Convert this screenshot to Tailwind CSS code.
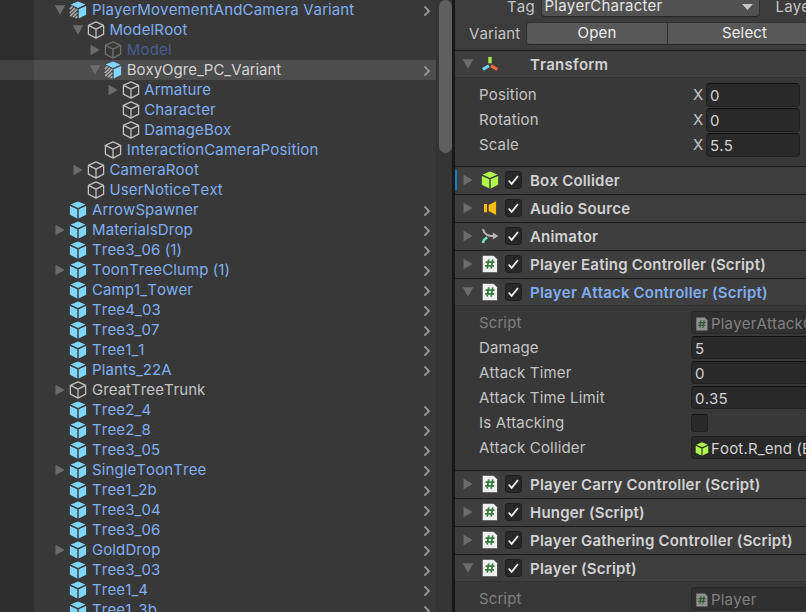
<!DOCTYPE html>
<html lang="en">
<head>
<meta charset="utf-8">
<title>Hierarchy and Inspector</title>
<script src="https://cdn.jsdelivr.net/npm/@tailwindcss/browser@4"></script>
</head>
<body class="w-[806px] h-[612px] overflow-hidden bg-[#383838] font-['Inter',sans-serif] text-[15px] leading-5 tracking-[0.17px] [font-kerning:none] text-[#c4c4c4]">
<svg class="hidden">
  <symbol id="outline" viewBox="0 0 18 18"><path d="M9 .9 16.6 4.3V13.2L9 17.1 1.4 13.2V4.3ZM1.4 4.3 9 8.1 16.6 4.3M9 8.1V17.1" fill="none" stroke="currentColor" stroke-width="1.3" stroke-linejoin="round"/></symbol>
  <symbol id="cube" viewBox="0 0 18 18"><path d="M9 .4 16.4 3.6 9 6.9 1.6 3.6Z" fill="currentColor"/><path d="M.9 4.9 8.3 8.2V17.4L.9 13.8ZM17.1 4.9 9.7 8.2V17.4L17.1 13.8Z" fill="currentColor"/></symbol>
  <symbol id="variant" viewBox="0 0 18 18"><path d="M9 .4 16.4 3.6 9 6.9 1.6 3.6Z" fill="#7fd6fd"/><path d="M17.1 4.9 9.7 8.2V17.4L17.1 13.8Z" fill="#7fd6fd"/><path d="M.8 8.2 3.6 5.4M.8 12 6 6.8M1.2 15.2 8.2 8.2M4 16.2 8.4 11.8M6.6 17.2 8.4 15.4" stroke="#a8a8a8" stroke-width="1.7" fill="none"/></symbol>
  <symbol id="down" viewBox="0 0 12 12"><path d="M.7 1.3H11.3L6 10.7Z" fill="#6c6c6c"/></symbol>
  <symbol id="right" viewBox="0 0 12 12"><path d="M1.5 .8 10.7 6 1.5 11.2Z" fill="#6c6c6c"/></symbol>
  <symbol id="chev" viewBox="0 0 8 12"><path d="M1.4 1.4 6 6 1.4 10.6" fill="none" stroke="#969696" stroke-width="1.9"/></symbol>
  <symbol id="check" viewBox="0 0 15 16"><path d="M2.6 8.5 5.7 11.8 12 4" fill="none" stroke="#eee" stroke-width="1.8"/></symbol>
  <symbol id="transform" viewBox="0 0 18 18"><path d="M9 1.9V8.3" stroke="#a5f04d" stroke-width="3.4"/><path d="M8 10.9 1.8 14.3" stroke="#70cdf8" stroke-width="3.2"/><path d="M10 10.9 16.4 14.3" stroke="#f4693b" stroke-width="3.2"/></symbol>
  <symbol id="audio" viewBox="0 0 18 18"><path d="M3 4.9H6V13.2H3ZM7.6 6 15.1 2.2V15.9L7.6 12.1Z" fill="#fcbc0d"/></symbol>
  <symbol id="animator" viewBox="0 0 18 18"><path d="M2 2.2C3.4 7.4 6.2 9 13 9" fill="none" stroke="#b5b5b5" stroke-width="2.1"/><path d="M11.8 5.6 17.4 9 11.8 12.4Z" fill="#b5b5b5"/><path d="M2 16C2.3 13 3.6 11.6 6.4 10.6" fill="none" stroke="#69e4c6" stroke-width="2.6"/></symbol>
  <symbol id="script" viewBox="0 0 18 18"><path d="M1.7 .7H12.6L16.1 4.2V17.2H1.7Z" fill="#efefef"/><path d="M7.7 4.3 6.2 13.7M11.7 4.3 10.2 13.7M4.6 7.2H13.5M4.1 10.8H13" stroke="#347c3c" stroke-width="1.7"/></symbol>
</svg>
<div class="flex h-[612px]">
  <main class="relative w-[436px] shrink-0 overflow-hidden bg-[linear-gradient(to_right,#2d2d2d_34px,#383838_34px)]" id="tree"></main>
  <div class="w-4 shrink-0 bg-[#353535] border-l border-[#303030] flex justify-end"><div class="w-[13px] h-[153px] rounded-full bg-[#5f5f5f]"></div></div>
  <div class="w-[3px] shrink-0 bg-[#191919]"></div>
  <aside class="w-[351px] shrink-0 overflow-hidden flex flex-col" id="inspector">
    <div class="h-[50px] shrink-0 bg-[#3c3c3c] overflow-hidden">
      <div class="h-[22px] flex items-start">
        <span class="w-[85.5px] pl-[52px] shrink-0 -mt-[3px]">Tag</span>
        <div class="w-[219px] h-[17px] shrink-0 bg-[#515151] border border-t-0 border-[#303030] border-b-[#242424] rounded-b-[4px] flex pl-[3px] pr-1.5 justify-between text-[#e4e4e4]"><span class="-mt-1 tracking-[0.22px]">PlayerCharacter</span><svg class="w-[11px] h-[6px] mt-1" viewBox="0 0 11 6"><path d="M0 0H11L5.5 6Z" fill="#c4c4c4"/></svg></div>
        <span class="ml-4 -mt-[3px]">Layer</span>
      </div>
      <div class="flex h-[23px]">
        <span class="w-[71px] pl-[14px] pt-[2px] shrink-0">Variant</span>
        <div class="w-[142px] shrink-0 bg-[#585858] border border-[#303030] border-b-[#242424] rounded-l-[4px] text-center text-[#eee]">Open</div>
        <div class="w-[153px] shrink-0 bg-[#585858] border-y border-[#303030] border-b-[#242424] text-center text-[#eee]">Select</div>
      </div>
    </div>
  </aside>
</div>
<script>
const icon = (id, cls) => `<svg class="${cls}"><use href="#${id}"/></svg>`;
const rows = [
  [0,'d','v','PlayerMovementAndCamera Variant',1],[1,'d','o','ModelRoot'],[2,'r','x','Model'],[2,'d','s','BoxyOgre_PC_Variant',1],
  [3,'r','o','Armature'],[3,'','o','Character'],[3,'','o','DamageBox'],[2,'','o','InteractionCameraPosition'],[1,'r','o','CameraRoot'],[1,'','o','UserNoticeText'],
  [0,'','c','ArrowSpawner',1],[0,'r','c','MaterialsDrop',1],[0,'','c','Tree3_06 (1)',1],[0,'r','c','ToonTreeClump (1)',1],[0,'','c','Camp1_Tower',1],
  [0,'','c','Tree4_03',1],[0,'','c','Tree3_07',1],[0,'','c','Tree1_1',1],[0,'','c','Plants_22A',1],[0,'r','g','GreatTreeTrunk'],
  [0,'','c','Tree2_4',1],[0,'','c','Tree2_8',1],[0,'','c','Tree3_05',1],[0,'r','c','SingleToonTree',1],[0,'','c','Tree1_2b',1],
  [0,'','c','Tree3_04',1],[0,'','c','Tree3_06',1],[0,'r','c','GoldDrop',1],[0,'','c','Tree3_03',1],[0,'','c','Tree1_4',1],[0,'','c','Tree1_3b',1]];
const kinds = {
  v:['variant','text-[#7fd6fd]','text-[#7faef3] tracking-[0.14px]'], s:['variant','text-[#7fd6fd]','text-[#d2d2d2] tracking-[-0.03px]'],
  o:['outline','text-[#c0c0c0]','text-[#7faef3]'], x:['outline','text-[#707070]','text-[#455f91]'],
  c:['cube','text-[#7fd6fd]','text-[#7faef3] tracking-[0.1px]'], g:['outline','text-[#c0c0c0]','text-[#c4c4c4] tracking-[0.02px]']};
document.getElementById('tree').innerHTML = rows.map(([depth, arrow, kind, name, prefab]) => {
  const [shape, tint, color] = kinds[kind];
  const bg = kind === 's' ? 'bg-[linear-gradient(to_right,#424242_34px,#4d4d4d_34px)]' : '';
  return `<div class="flex items-center h-5 pr-[5px] ${bg}"><span class="shrink-0" style="width:${54.4 + depth * 17.4}px"></span>
    <span class="w-[15px] h-3 shrink-0">${arrow ? icon(arrow === 'd' ? 'down' : 'right', 'w-3 h-3') : ''}</span>
    ${icon(shape, 'w-[18px] h-[18px] shrink-0 ' + tint)}<span class="pl-[4.6px] whitespace-nowrap ${color}">${name}</span>
    ${prefab ? icon('chev', 'w-2 h-3 shrink-0 ml-auto mt-px') : ''}</div>`;
}).join('');

const header = (name, shape, open, checked, extra = '') => `<div class="${open ? 'h-[27px]' : 'h-7'} shrink-0 border-t border-[#1a1a1a] bg-[#3e3e3e] flex items-start relative ${extra}">
  ${icon(open ? 'down' : 'right', 'w-3 h-3 ml-[7px] mt-[7px] shrink-0')}
  ${icon(shape, 'w-[18px] h-[18px] ml-[7px] mt-1 shrink-0 text-[#b0f94b]')}
  <span class="w-[17px] h-[18px] ml-[6px] mr-2 mt-1 shrink-0 ${checked ? 'bg-[#282828] border border-[#202020] rounded-[3px]' : ''}">${checked ? icon('check', 'w-[15px] h-4') : ''}</span>
  <span class="mt-1 tracking-[0.2px] font-semibold whitespace-nowrap ${name.includes('Attack') ? 'text-[#7faef3]' : 'text-[#d2d2d2]'}">${name}</span></div>`;
const field = (label, value, type) => `<div class="h-[25px] flex items-start pl-6 shrink-0 ${type === 'script' ? 'text-[#808080]' : ''}">
  <span class="w-[212px] shrink-0 pt-[2px]">${label}</span>${
  type === 'axis' ? `<span class="w-[15px] pl-[2px] pt-[2px] shrink-0">X</span><div class="w-[94px] h-6 bg-[#292929] border border-[#202020] border-t-[#101010] rounded-[4px] pl-[3px] pt-[2px] text-[#d2d2d2]">${value}</div>` :
  type === 'box' ? `<div class="w-[17px] h-[18px] mt-[3px] bg-[#292929] border border-[#202020] border-t-[#101010] rounded-[3px]"></div>` :
  `<div class="w-[130px] h-[23px] shrink-0 rounded-l-[4px] border border-r-0 flex items-center whitespace-nowrap ${type === 'script' ? 'bg-[#303030] border-[#282828] pl-[3px] pt-[2px]' : type === 'object' ? 'bg-[#292929] border-[#202020] pl-[3px] pt-[2px] text-[#d2d2d2]' : 'bg-[#292929] border-[#202020] border-t-[#101010] pl-[3px] pt-[2px] text-[#d2d2d2]'}">${
    type === 'script' ? icon('script', 'w-[14px] h-[14px] shrink-0 opacity-50 mr-[2px]') : type === 'object' ? icon('cube', 'w-[14px] h-[14px] shrink-0 text-[#b0f94b] mr-[2px]') : ''}<span>${value}</span></div>`}</div>`;
const body = (height, html) => `<div class="border-t border-[#303030] pt-[5px] shrink-0" style="height:${height}px">${html}</div>`;
document.getElementById('inspector').insertAdjacentHTML('beforeend',
  header('Transform', 'transform', true, false) +
  body(89, field('Position','0','axis') + field('Rotation','0','axis') + field('Scale','5.5','axis')) +
  header('Box Collider','cube',false,true,'before:absolute before:left-0 before:top-[3px] before:w-[2px] before:h-5 before:bg-[#0f81be]') +
  header('Audio Source','audio',false,true) + header('Animator','animator',false,true) + header('Player Eating Controller (Script)','script',false,true) +
  header('Player Attack Controller (Script)','script',true,true) +
  body(165, field('Script','PlayerAttackController','script') + field('Damage','5') + field('Attack Timer','0') + field('Attack Time Limit','0.35') + field('Is Attacking','','box') + field('Attack Collider','Foot.R_end (Box Collider)','object')) +
  header('Player Carry Controller (Script)','script',false,true) + header('Hunger (Script)','script',false,true) + header('Player Gathering Controller (Script)','script',false,true) +
  header('Player (Script)','script',true,true) + body(40, field('Script','Player','script')));
</script>
</body>
</html>
